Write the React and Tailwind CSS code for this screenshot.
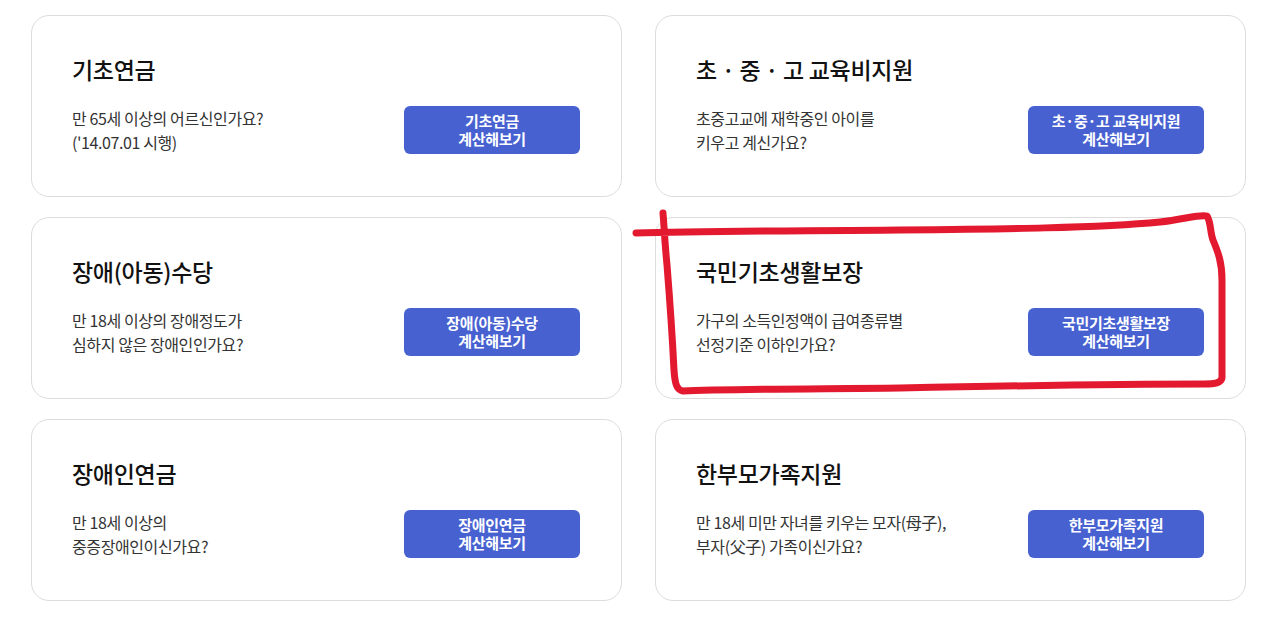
import React from "react";

const cards = [
  { title: "기초연금", desc: ["만 65세 이상의 어르신인가요?", "('14.07.01 시행)"], btn: ["기초연금", "계산해보기"] },
  { title: "초 · 중 · 고 교육비지원", desc: ["초중고교에 재학중인 아이를", "키우고 계신가요?"], btn: ["초·중·고 교육비지원", "계산해보기"] },
  { title: "장애(아동)수당", desc: ["만 18세 이상의 장애정도가", "심하지 않은 장애인인가요?"], btn: ["장애(아동)수당", "계산해보기"] },
  { title: "국민기초생활보장", desc: ["가구의 소득인정액이 급여종류별", "선정기준 이하인가요?"], btn: ["국민기초생활보장", "계산해보기"] },
  { title: "장애인연금", desc: ["만 18세 이상의", "중증장애인이신가요?"], btn: ["장애인연금", "계산해보기"] },
  { title: "한부모가족지원", desc: ["만 18세 미만 자녀를 키우는 모자(母子),", "부자(父子) 가족이신가요?"], btn: ["한부모가족지원", "계산해보기"] },
];

function Card({ c }) {
  return (
    <div className="h-[182px] rounded-[18px] border border-[#dcdcdc] bg-white pl-[40px] pr-[41px] pt-[37px]">
      <div className="text-[23px] leading-[32px] font-medium text-[#111] tracking-[-0.3px]">{c.title}</div>
      <div className="mt-[21px] flex items-center justify-between">
        <div className="text-[16px] leading-[24px] text-[#333] tracking-[-0.4px]">
          <div>{c.desc[0]}</div>
          <div>{c.desc[1]}</div>
        </div>
        <button className="flex h-[48px] w-[176px] shrink-0 flex-col items-center justify-center rounded-[6px] bg-[#4761d1] text-[15px] font-bold leading-[18px] text-white tracking-[-0.3px]">
          <span>{c.btn[0]}</span>
          <span>{c.btn[1]}</span>
        </button>
      </div>
    </div>
  );
}

export default function App() {
  return (
    <div
      className="relative h-[618px] w-[1265px] bg-white"
      style={{ fontFamily: '"Noto Sans CJK KR", "Noto Sans", sans-serif' }}
    >
      <div className="grid grid-cols-[591px_591px] gap-x-[33px] gap-y-[20px] pl-[31px] pt-[15px]">
        {cards.map((c, i) => (
          <Card key={i} c={c} />
        ))}
      </div>
      <svg
        className="pointer-events-none absolute left-0 top-0"
        width="1265"
        height="618"
        viewBox="0 0 1265 618"
      >
        <path
          d="M636 233 C 700 231, 800 231, 900 230 C 1000 229, 1100 228, 1160 222 C 1185 219, 1200 214, 1207 216 C 1211 222, 1210 232, 1213 240 C 1218 252, 1222 262, 1222 280 L 1222 378 C 1221 383, 1215 384, 1205 384 C 1100 384, 1000 386, 900 388 C 800 389, 720 389, 683 391 C 677 390, 675 385, 674 370 C 672 330, 669 290, 667 265 C 665 245, 664 225, 663 213"
          fill="none"
          stroke="#e31a2f"
          strokeWidth="7"
          strokeLinecap="round"
          strokeLinejoin="round"
        />
      </svg>
    </div>
  );
}
